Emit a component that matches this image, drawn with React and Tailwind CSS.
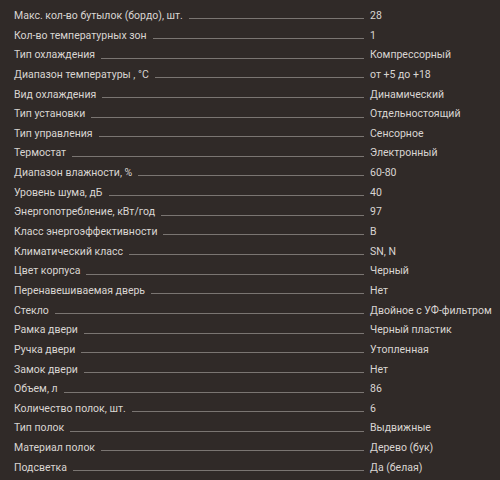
const specs = [
  ['Макс. кол-во бутылок (бордо), шт.', '28'],
  ['Кол-во температурных зон', '1'],
  ['Тип охлаждения', 'Компрессорный'],
  ['Диапазон температуры , °C', 'от +5 до +18'],
  ['Вид охлаждения', 'Динамический'],
  ['Тип установки', 'Отдельностоящий'],
  ['Тип управления', 'Сенсорное'],
  ['Термостат', 'Электронный'],
  ['Диапазон влажности, %', '60-80'],
  ['Уровень шума, дБ', '40'],
  ['Энергопотребление, кВт/год', '97'],
  ['Класс энергоэффективности', 'B'],
  ['Климатический класс', 'SN, N'],
  ['Цвет корпуса', 'Черный'],
  ['Перенавешиваемая дверь', 'Нет'],
  ['Стекло', 'Двойное с УФ-фильтром'],
  ['Рамка двери', 'Черный пластик'],
  ['Ручка двери', 'Утопленная'],
  ['Замок двери', 'Нет'],
  ['Объем, л', '86'],
  ['Количество полок, шт.', '6'],
  ['Тип полок', 'Выдвижные'],
  ['Материал полок', 'Дерево (бук)'],
  ['Подсветка', 'Да (белая)'],
];

export default function App() {
  return (
    <div className="w-[500px] h-[480px] overflow-hidden bg-[#302a28] pt-[6px] pl-[14px] font-['Roboto',sans-serif] text-[10.5px] text-[#d9d5d2]">
      {specs.map(([label, value]) => (
        <div key={label} className="flex h-[19.65px] items-center leading-[19.65px]">
          <div className="flex w-[350px] shrink-0 items-center">
            <span className="whitespace-nowrap">{label}</span>
            <div className="ml-[6px] mt-[6px] h-px flex-1 bg-[#7a7572]" />
          </div>
          <span className="ml-[6px] whitespace-nowrap">{value}</span>
        </div>
      ))}
    </div>
  );
}
